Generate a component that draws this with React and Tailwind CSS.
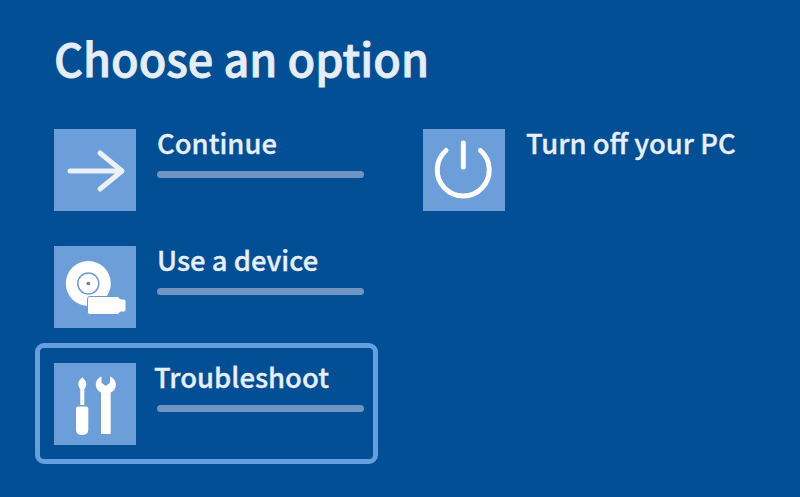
function ArrowIcon() {
  return (
    <svg width="82" height="82" viewBox="0 0 82 82" fill="none" stroke="#ecf1f8" strokeWidth="5" strokeLinecap="round" strokeLinejoin="round">
      <path d="M16 42H67" />
      <path d="M46 24L68 42L46 60" />
    </svg>
  );
}

function DeviceIcon() {
  return (
    <svg width="82" height="82" viewBox="0 0 82 82">
      <circle cx="34.300" cy="37.500" r="22.500" fill="#fff" />
      <circle cx="34.300" cy="37.500" r="10.500" fill="none" stroke="#6f9bce" strokeWidth="1.500" />
      <circle cx="34.300" cy="37.500" r="1.800" fill="#5c7fa8" />
      <path d="M33.500 52.500a2 2 0 0 1 2-2H64l2.500 2.500H70a2 2 0 0 1 2 2v9a2 2 0 0 1-2 2h-3.500L64 68.500H35.500a2 2 0 0 1-2-2z" fill="#fff" stroke="#6f9bce" strokeWidth="1" />
    </svg>
  );
}

function ToolsIcon() {
  return (
    <svg width="82" height="82" viewBox="0 0 82 82" fill="#fff">
      <path d="M28.300 14.500c2.500 1.800 4 4 4 6.500 0 2.200-1.200 3.900-2 5.500V42h-4V26.500c-.8-1.600-2-3.300-2-5.500 0-2.500 1.500-4.700 4-6.500z" />
      <path d="M22 45.500a2 2 0 0 1 2-2h8.300a2 2 0 0 1 2 2V67a5 5 0 0 1-5 5h-2.300a5 5 0 0 1-5-5z" />
      <path d="M47.500 13.500v6.200l4.300 3.300 4.200-3.300v-6.200c3.400 1.400 5.900 4.300 5.900 8 0 3.700-2.100 6.700-5.200 8V71H47V29.500c-3.100-1.300-5.200-4.300-5.200-8 0-3.700 2.300-6.600 5.700-8z" />
    </svg>
  );
}

function PowerIcon() {
  return (
    <svg width="82" height="82" viewBox="0 0 82 82" fill="none" stroke="#fff" strokeLinecap="round">
      <path d="M40.300 14V38" strokeWidth="5" />
      <path d="M23 21.500A26 26 0 1 0 57.500 21.500" strokeWidth="5" />
    </svg>
  );
}

function Option({ icon, label, bar, focused }) {
  return (
    <div className="relative flex h-[82px] w-[310px]">
      {focused && (
        <div className="absolute -left-[19px] -right-[14px] -top-[20px] -bottom-[19px] rounded-[9px] border-[5px] border-[#659fdf]" />
      )}
      <div className="flex h-[82px] w-[82px] shrink-0 items-center justify-center bg-[#6c9fd9]">{icon}</div>
      <div className={focused ? "ml-[18px] flex-1" : "ml-[21px] flex-1"}>
        <div className="-mt-[2px] text-[27.4px] font-medium leading-[30px] text-[#e8eff8] whitespace-nowrap [-webkit-text-stroke:0.3px_#e8eff8]">{label}</div>
        {bar && <div className={focused ? "ml-[3px] mt-[14px] h-[7px] rounded-full bg-[#6f95c2]" : "mt-[14px] h-[7px] rounded-full bg-[#6f95c2]"} />}
      </div>
    </div>
  );
}

export default function App() {
  return (
    <div className="h-[497px] w-[800px] overflow-hidden bg-[#034f96] pl-[54px] pt-[30px] font-['Noto_Sans_CJK_JP','Noto_Sans',sans-serif]">
      <h1 className="text-[45px] font-medium leading-[56px] text-[#e6edf5] [-webkit-text-stroke:0.8px_#e6edf5]">Choose an option</h1>

      <div className="mt-[43px] flex gap-[59px]">
        <div className="flex flex-col gap-[35px]">
          <Option icon={<ArrowIcon />} label="Continue" bar />
          <Option icon={<DeviceIcon />} label="Use a device" bar />
          <Option icon={<ToolsIcon />} label="Troubleshoot" bar focused />
        </div>
        <div>
          <Option icon={<PowerIcon />} label="Turn off your PC" />
        </div>
      </div>
    </div>
  );
}
